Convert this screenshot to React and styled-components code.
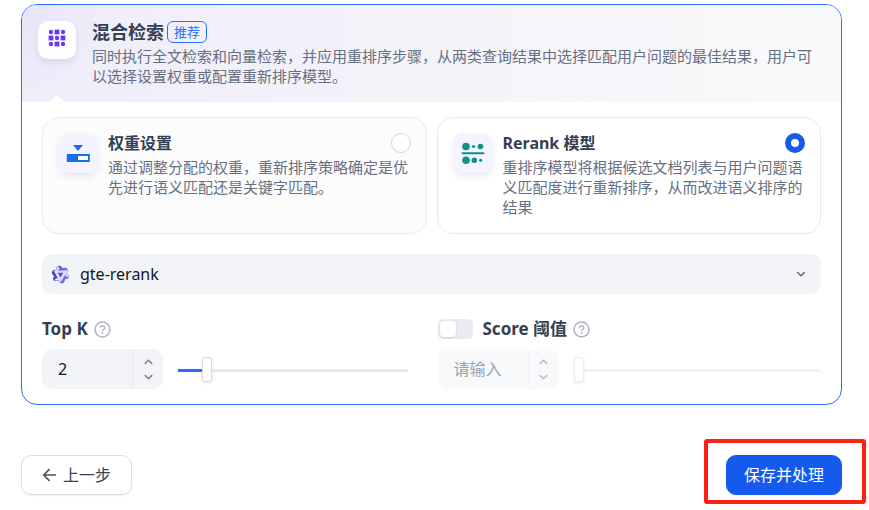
import React, { useState } from 'react';
import styled, { createGlobalStyle } from 'styled-components';

const GlobalStyle = createGlobalStyle`
  *, *::before, *::after { box-sizing: border-box; }
  body {
    margin: 0;
    background: #fff;
    color: #101828;
    font: 16px/20px "Noto Sans", "Noto Sans CJK SC", sans-serif;
  }
  button, input, select { font: inherit; color: inherit; margin: 0; }
`;

const Page = styled.main`
  padding: 4px 27px 15px 21px;
`;

const Method = styled.section`
  border: 1px solid #296dff;
  border-radius: 16px;
  background: #fff;
  overflow: hidden;
`;

const MethodHeader = styled.header`
  position: relative;
  display: flex;
  align-items: flex-start;
  gap: 16px;
  padding: 16px;
  background: radial-gradient(circle at 0 0, #e8e4fa 0, transparent 90px),
    linear-gradient(90deg, #efedf9, #f4f3f9 50%, #f9fafb);

  &::after {
    content: '';
    position: absolute;
    left: 27px;
    bottom: 0;
    width: 16px;
    height: 6px;
    background: #fff;
    clip-path: polygon(0 100%, 40% 10%, 50% 0, 60% 10%, 100% 100%);
  }
`;

const IconTile = styled.span`
  flex: none;
  display: flex;
  align-items: center;
  justify-content: center;
  width: ${(p) => (p.$plain ? 38 : 40)}px;
  height: ${(p) => (p.$plain ? 38 : 40)}px;
  border-radius: 10px;
  background: ${(p) => (p.$plain ? '#fefeff' : '#f4f3ff')};
  box-shadow: 0 4px 8px -2px rgba(16, 24, 40, 0.12);
`;

const TextBlock = styled.div`
  flex: 1;
  min-width: 0;
`;

const MethodTitleRow = styled.div`
  display: flex;
  align-items: center;
  gap: 3px;
  height: 22px;
  margin-bottom: 3px;
`;

const MethodTitle = styled.h2`
  margin: 0;
  font-size: 18px;
  font-weight: 700;
  color: #354052;
`;

const Tag = styled.span`
  padding: 0 6px;
  border: 1px solid #296dff;
  border-radius: 6px;
  font-size: 13px;
  color: #296dff;
`;

const Description = styled.p`
  margin: 0;
  font-size: 15px;
  color: #676f83;
`;

const MethodBody = styled.div`
  padding: 15px 20px;
`;

const TwoColumns = styled.div`
  display: grid;
  grid-template-columns: 1fr 1fr;
  gap: 10px;
`;

const OptionCard = styled.label`
  display: flex;
  align-items: flex-start;
  gap: 10px;
  padding: 15px 15px 16px;
  border: 1px solid #e9eaee;
  border-radius: 16px;
  background: ${(p) => (p.$selected ? '#fff' : '#fcfcfd')};
  cursor: pointer;
`;

const OptionTitleRow = styled.span`
  display: flex;
  align-items: center;
  justify-content: space-between;
  margin-bottom: 4px;
  font-weight: 700;
  color: #354052;
`;

const Radio = styled.input`
  appearance: none;
  width: 20px;
  height: 20px;
  border: 1px solid #d0d5dc;
  border-radius: 50%;
  background: #fff;

  &:checked {
    border: 6px solid #155aef;
  }
`;

const ModelPicker = styled.div`
  display: flex;
  align-items: center;
  gap: 10px;
  height: 40px;
  margin: 20px 0 25px;
  padding: 0 13px 0 9px;
  border-radius: 10px;
  background: #f2f4f7;
  color: #676f83;
`;

const ModelSelect = styled.select`
  appearance: none;
  flex: 1;
  min-width: 0;
  height: 40px;
  padding: 0;
  border: 0;
  background: none;
  color: #101828;
`;

const Field = styled.div`
  padding: ${(p) => (p.$inset === 'right' ? '0 19px 0 0' : '0 0 0 1px')};
`;

const FieldLabel = styled.div`
  display: flex;
  align-items: center;
  height: 20px;
  margin-bottom: 10px;
  color: #b0b4be;

  label {
    margin-right: 6px;
    font-size: 17px;
    font-weight: 700;
    color: #354052;
  }
`;

const Switch = styled.input`
  appearance: none;
  width: 35px;
  height: 20px;
  margin-right: 10px;
  padding: 2px;
  border-radius: 5px;
  background: ${(p) => (p.checked ? '#155aef' : '#e9ebf0')};

  &::before {
    content: '';
    display: block;
    width: 16px;
    height: 16px;
    margin-left: ${(p) => (p.checked ? 15 : 0)}px;
    border-radius: 4px;
    background: #fff;
    box-shadow: 0 1px 2px rgba(16, 24, 40, 0.15);
  }
`;

const Controls = styled.div`
  display: flex;
  align-items: center;
  gap: 15px;
`;

const NumberBox = styled.div`
  flex: none;
  display: flex;
  width: 121px;
  height: 40px;
  border-radius: 10px;
  overflow: hidden;
  background: ${(p) => (p.$disabled ? '#f8f9fb' : '#f2f4f7')};
  color: ${(p) => (p.$disabled ? '#b8bcc6' : '#7b8294')};
`;

const NumberInput = styled.input`
  appearance: textfield;
  flex: 1;
  min-width: 0;
  padding: 0 0 0 16px;
  border: 0;
  background: none;
  color: #101828;

  &::placeholder { color: #98a2b2; }
  &::-webkit-inner-spin-button { appearance: none; margin: 0; }
`;

const Stepper = styled.div`
  display: flex;
  flex-direction: column;
  width: 31px;
  padding: 5px 0;
  border-left: 1px solid ${(p) => (p.$disabled ? '#f2f4f7' : '#e6e8ed')};
`;

const StepButton = styled.button`
  flex: 1;
  display: flex;
  align-items: center;
  justify-content: center;
  padding: 0;
  border: 0;
  background: none;
`;

const Slider = styled.input`
  appearance: none;
  flex: 1;
  min-width: 0;
  height: 25px;
  background: linear-gradient(#296dff, #296dff) 0 12px / var(--fill) 3px no-repeat,
    linear-gradient(
      ${(p) => (p.disabled ? '#f4f4f7, #f4f4f7' : '#e9e9f0, #e9e9f0')}
    ) 0 12px / 100% 3px no-repeat;

  &::-webkit-slider-thumb {
    appearance: none;
    width: 10px;
    height: 25px;
    border: 1px solid ${(p) => (p.disabled ? '#ececef' : '#d9dade')};
    border-radius: 3px;
    background: #fff;
    box-shadow: 0 1px 3px rgba(16, 24, 40, 0.12);
  }
`;

const Actions = styled.footer`
  display: flex;
  justify-content: space-between;
  margin-top: 50px;
`;

const ActionButton = styled.button`
  display: flex;
  align-items: center;
  justify-content: center;
  gap: 7px;
  height: 40px;
  padding: 0 ${(p) => (p.$primary ? 17 : 20)}px;
  border: 1px solid ${(p) => (p.$primary ? '#155aef' : '#dcdee3')};
  border-radius: 10px;
  background: ${(p) => (p.$primary ? '#155aef' : '#fff')};
  color: ${(p) => (p.$primary ? '#fff' : '#354052')};
  box-shadow: 0 1px 2px rgba(16, 24, 40, 0.06);
`;

const Highlighted = styled.div`
  position: relative;

  &::after {
    content: '';
    position: absolute;
    inset: -16px -24px -9px -22px;
    border: 4px solid #ff2013;
    border-radius: 3px;
    pointer-events: none;
  }
`;

const GridIcon = () => (
  <svg width="18" height="22" viewBox="0 0 18 22" fill="#6938ef" aria-hidden="true">
    {[3, 9, 15].map((y, row) =>
      [3, 9, 15].map((x, col) =>
        (row + col) % 2 === 0 ? (
          <circle key={`${x}-${y}`} cx={x} cy={y} r="2.2" />
        ) : (
          <rect key={`${x}-${y}`} x={x - 2.4} y={y - 2.4} width="4.8" height="4.8" />
        )
      )
    )}
  </svg>
);

const WeightIcon = () => (
  <svg width="24" height="24" viewBox="0 0 24 24" aria-hidden="true">
    <path d="M7 4h10L12 10z" fill="#1570ef" />
    <rect x="0.8" y="13" width="23" height="8" rx="0.5" fill="#1570ef" />
    <rect x="12" y="15" width="10" height="4" fill="#fff" />
  </svg>
);

const RerankIcon = () => (
  <svg width="24" height="24" viewBox="0 0 24 24" fill="#0e9384" aria-hidden="true">
    <circle cx="5" cy="5.5" r="3.8" />
    <circle cx="12.5" cy="5.5" r="1.6" />
    <circle cx="19.5" cy="5.5" r="2.8" />
    <rect x="0.5" y="11.3" width="23" height="2" rx="1" />
    <circle cx="5" cy="19.3" r="3.8" />
    <circle cx="13.3" cy="19.3" r="2.8" />
    <circle cx="19.7" cy="19.3" r="1.6" />
  </svg>
);

const QwenLogo = () => (
  <svg width="19" height="19" viewBox="0 0 24 24" aria-hidden="true">
    <defs>
      <linearGradient id="qwen" x1="0" x2="1">
        <stop offset="0" stopColor="#3f3aa0" />
        <stop offset="0.5" stopColor="#6460ee" />
        <stop offset="1" stopColor="#8583f5" />
      </linearGradient>
    </defs>
    <path d="M9 1.5 3 7l9 15 9-8.5-3-7.5H9z" fill="#dcdcfb" />
    <path
      fill="url(#qwen)"
      fillRule="evenodd"
      d="M12.604 1.34c.393.69.784 1.382 1.174 2.075a.18.18 0 00.157.091h5.552c.174 0 .322.11.446.327l1.454 2.57c.19.337.24.478.024.837-.26.43-.513.864-.76 1.3l-.367.658c-.106.196-.223.28-.04.512l2.652 4.637c.172.301.111.494-.043.77-.437.785-.882 1.564-1.335 2.34-.159.272-.352.375-.68.37-.777-.016-1.552-.01-2.327.016a.099.099 0 00-.081.05 575.097 575.097 0 01-2.705 4.74c-.169.293-.38.363-.725.364-.997.003-2.002.004-3.017.002a.537.537 0 01-.465-.271l-1.335-2.323a.09.09 0 00-.083-.049H4.982c-.285.03-.553-.001-.805-.092l-1.603-2.77a.543.543 0 01-.002-.54l1.207-2.12a.198.198 0 000-.197 550.951 550.951 0 01-1.875-3.272l-.79-1.395c-.16-.31-.173-.496.095-.965.465-.813.927-1.625 1.387-2.436.132-.234.304-.334.584-.335a338.3 338.3 0 012.589-.001.124.124 0 00.107-.063l2.806-4.895a.488.488 0 01.422-.246c.524-.001 1.053 0 1.583-.006L11.704 1c.341-.003.724.032.9.34zm-3.432.403a.06.06 0 00-.052.03L6.254 6.788a.157.157 0 01-.135.078H3.253c-.056 0-.07.025-.041.074l5.81 10.156c.025.042.013.062-.034.063l-2.795.015a.218.218 0 00-.2.116l-1.32 2.31c-.044.078-.021.118.068.118l5.716.008c.046 0 .08.02.104.061l1.403 2.454c.046.081.092.082.139 0l5.006-8.76.783-1.382a.055.055 0 01.096 0l1.424 2.53a.122.122 0 00.107.062l2.763-.02a.04.04 0 00.035-.02.041.041 0 000-.04l-2.9-5.086a.108.108 0 010-.113l.293-.507 1.12-1.977c.024-.041.012-.062-.035-.062H9.2c-.059 0-.073-.026-.043-.077l1.434-2.505a.107.107 0 000-.114L9.225 1.774a.06.06 0 00-.053-.031z"
    />
    <path d="M8.5 9.8h7L12 15.9z" fill="#5451dc" />
  </svg>
);

const Chevron = ({ up = false, size = 9 }) => (
  <svg width={size} height="6" viewBox="0 0 9 6" fill="none" aria-hidden="true">
    <path
      d={up ? 'M0.8 4.9 4.5 1.2 8.2 4.9' : 'M0.8 1.1 4.5 4.8 8.2 1.1'}
      stroke="currentColor"
      strokeWidth="1.5"
    />
  </svg>
);

const HelpIcon = () => (
  <svg width="17" height="17" viewBox="0 0 17 17" fill="none" stroke="currentColor" aria-hidden="true">
    <circle cx="8.5" cy="8.5" r="7.5" strokeWidth="1.5" />
    <path d="M6.4 6.9a2.1 2.1 0 1 1 3.2 1.7c-.7.4-1.1.7-1.1 1.5" strokeWidth="1.4" />
    <circle cx="8.5" cy="12" r="0.9" fill="currentColor" stroke="none" />
  </svg>
);

const BackArrow = () => (
  <svg width="14" height="14" viewBox="0 0 14 14" fill="none" aria-hidden="true">
    <path d="M14 7H2M7.5 1.2 1.8 7 7.5 12.8" stroke="#495464" strokeWidth="1.7" />
  </svg>
);

const OPTIONS = [
  {
    id: 'weight',
    title: '权重设置',
    text: '通过调整分配的权重，重新排序策略确定是优先进行语义匹配还是关键字匹配。',
    Icon: WeightIcon,
  },
  {
    id: 'rerank',
    title: 'Rerank 模型',
    text: '重排序模型将根据候选文档列表与用户问题语义匹配度进行重新排序，从而改进语义排序的结果',
    Icon: RerankIcon,
  },
];

function NumberControls({ id, name, value, onChange, min, max, step, disabled, placeholder }) {
  const current = value === '' ? min : Number(value);
  const ratio = (current - min) / (max - min);
  const move = (delta) =>
    onChange(Math.min(max, Math.max(min, Number((current + delta).toFixed(2)))));

  return (
    <Controls>
      <NumberBox $disabled={disabled}>
        <NumberInput
          id={id}
          type="number"
          aria-label={name}
          min={min}
          max={max}
          step={step}
          value={value}
          placeholder={placeholder}
          disabled={disabled}
          onChange={(e) => onChange(e.target.value)}
        />
        <Stepper $disabled={disabled}>
          <StepButton type="button" aria-label={`${name} +`} disabled={disabled} onClick={() => move(step)}>
            <Chevron up />
          </StepButton>
          <StepButton type="button" aria-label={`${name} -`} disabled={disabled} onClick={() => move(-step)}>
            <Chevron />
          </StepButton>
        </Stepper>
      </NumberBox>
      <Slider
        type="range"
        aria-label={name}
        min={min}
        max={max}
        step={step}
        value={current}
        disabled={disabled}
        onChange={(e) => onChange(Number(e.target.value))}
        style={{ '--fill': `${ratio * 100}%` }}
      />
    </Controls>
  );
}

export default function App() {
  const [mode, setMode] = useState('rerank');
  const [topK, setTopK] = useState(2);
  const [scoreOn, setScoreOn] = useState(false);
  const [score, setScore] = useState('');

  return (
    <Page lang="zh-CN">
      <GlobalStyle />
      <Method>
        <MethodHeader>
          <IconTile $plain>
            <GridIcon />
          </IconTile>
          <TextBlock>
            <MethodTitleRow>
              <MethodTitle>混合检索</MethodTitle>
              <Tag>推荐</Tag>
            </MethodTitleRow>
            <Description>
              同时执行全文检索和向量检索，并应用重排序步骤，从两类查询结果中选择匹配用户问题的最佳结果，用户可以选择设置权重或配置重新排序模型。
            </Description>
          </TextBlock>
        </MethodHeader>
        <MethodBody>
          <TwoColumns>
            {OPTIONS.map(({ id, title, text, Icon }) => (
              <OptionCard key={id} htmlFor={id} $selected={mode === id}>
                <IconTile>
                  <Icon />
                </IconTile>
                <TextBlock>
                  <OptionTitleRow>
                    {title}
                    <Radio
                      id={id}
                      type="radio"
                      name="mode"
                      checked={mode === id}
                      onChange={() => setMode(id)}
                    />
                  </OptionTitleRow>
                  <Description>{text}</Description>
                </TextBlock>
              </OptionCard>
            ))}
          </TwoColumns>
          <ModelPicker>
            <QwenLogo />
            <ModelSelect aria-label="Rerank 模型" defaultValue="gte-rerank">
              <option value="gte-rerank">gte-rerank</option>
            </ModelSelect>
            <Chevron size={14} />
          </ModelPicker>
          <TwoColumns>
            <Field $inset="right">
              <FieldLabel>
                <label htmlFor="top-k">Top K</label>
                <HelpIcon />
              </FieldLabel>
              <NumberControls
                id="top-k"
                name="Top K"
                min={1}
                max={10}
                step={1}
                value={topK}
                onChange={setTopK}
              />
            </Field>
            <Field>
              <FieldLabel>
                <Switch
                  id="score-on"
                  type="checkbox"
                  role="switch"
                  checked={scoreOn}
                  onChange={(e) => setScoreOn(e.target.checked)}
                />
                <label htmlFor="score-on">Score 阈值</label>
                <HelpIcon />
              </FieldLabel>
              <NumberControls
                id="score"
                name="Score 阈值"
                min={0}
                max={1}
                step={0.01}
                value={score}
                placeholder="请输入"
                disabled={!scoreOn}
                onChange={setScore}
              />
            </Field>
          </TwoColumns>
        </MethodBody>
      </Method>
      <Actions>
        <ActionButton type="button">
          <BackArrow />
          上一步
        </ActionButton>
        <Highlighted>
          <ActionButton type="button" $primary>
            保存并处理
          </ActionButton>
        </Highlighted>
      </Actions>
    </Page>
  );
}
